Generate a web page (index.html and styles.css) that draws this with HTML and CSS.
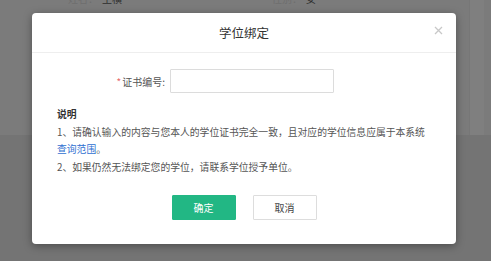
FILE: index.html
```html
<!DOCTYPE html>
<html lang="zh-CN">
<head>
<meta charset="utf-8">
<title>学位绑定</title>
<link rel="stylesheet" href="styles.css">
</head>
<body>
<div class="page">
  <div class="page-top">
    <div class="info-row">
      <span class="field"><span class="k">姓名：</span><span class="v">王横</span></span>
      <span class="field f2"><span class="k">性别：</span><span class="v">女</span></span>
    </div>
    <div class="scroll-strip"></div>
  </div>
  <div class="page-bottom"></div>
</div>
<div class="modal">
  <div class="modal-header">
    <span class="modal-title">学位绑定</span>
    <span class="close">
      <svg width="9" height="9" viewBox="0 0 9 9"><path d="M1 1L8 8M8 1L1 8" stroke="#c8c8c8" stroke-width="1.3" fill="none"/></svg>
    </span>
  </div>
  <div class="modal-body">
    <div class="form-row">
      <label class="form-label"><span class="req">*</span>证书编号:</label>
      <input class="form-input" type="text">
    </div>
    <div class="notes">
      <div class="notes-title">说明</div>
      <div>1、请确认输入的内容与您本人的学位证书完全一致，且对应的学位信息应属于本系统</div>
      <div><a class="link">查询范围</a>。</div>
      <div>2、如果仍然无法绑定您的学位，请联系学位授予单位。</div>
    </div>
    <div class="actions">
      <button class="btn btn-primary">确定</button>
      <button class="btn btn-default">取消</button>
    </div>
  </div>
</div>
</body>
</html>
```

FILE: styles.css
```css
html, body {
  margin: 0;
  padding: 0;
}
body {
  width: 491px;
  height: 261px;
  overflow: hidden;
  position: relative;
  font-family: "Noto Sans CJK SC", "Microsoft YaHei", sans-serif;
  background: #747474;
}
.page {
  display: flex;
  flex-direction: column;
  height: 261px;
}
.page-top {
  height: 135px;
  background: #7b7b7b;
  display: flex;
  position: relative;
}
.info-row {
  flex: 1;
  display: flex;
  margin-top: -8px;
  padding-left: 68px;
  font-size: 10px;
  line-height: 13px;
  height: 13px;
}
.field .k { color: #6e6e6e; margin-right: 4px; }
.field .v { color: #2e2e2e; }
.f2 { margin-left: 150px; }
.scroll-strip {
  width: 14px;
  margin-right: 7px;
  background: #7f7f7f;
  border-left: 1px solid #777;
}
.page-bottom {
  flex: 1;
  background: #747474;
}
.modal {
  position: absolute;
  left: 32px;
  top: 13px;
  width: 424px;
  height: 231px;
  background: #fff;
  border-radius: 4px;
  box-shadow: 0 2px 8px rgba(0, 0, 0, 0.35);
  display: flex;
  flex-direction: column;
}
.modal-header {
  height: 39px;
  border-bottom: 1px solid #eeeeee;
  display: flex;
  align-items: center;
  justify-content: center;
  position: relative;
}
.modal-title {
  font-size: 12.5px;
  color: #333;
}
.close {
  position: absolute;
  right: 13px;
  top: 13px;
  width: 9px;
  height: 9px;
  display: flex;
}
.modal-body {
  display: flex;
  flex-direction: column;
  padding-top: 16px;
}
.form-row {
  display: flex;
  align-items: center;
  height: 24px;
}
.form-label {
  width: 133px;
  text-align: right;
  font-size: 10px;
  color: #555;
  margin-right: 5px;
}
.req {
  color: #e66a6a;
  font-size: 10px;
  margin-right: 1px;
}
.form-input {
  width: 164px;
  height: 24px;
  box-sizing: border-box;
  border: 1px solid #dcdcdc;
  border-radius: 1px;
  margin: 0;
  padding: 0 6px;
  outline: none;
}
.notes {
  margin-top: 13px;
  padding-left: 25px;
  font-size: 9.8px;
  line-height: 17.6px;
  color: #555;
}
.notes-title {
  color: #333;
  font-weight: bold;
}
.link {
  color: #2f6fd1;
  text-decoration: none;
}
.actions {
  display: flex;
  justify-content: center;
  gap: 17px;
  margin-top: 19px;
}
.btn {
  width: 64px;
  height: 25px;
  box-sizing: border-box;
  font-family: "Noto Sans CJK SC", sans-serif;
  font-size: 10px;
  border-radius: 1px;
  margin: 0;
  padding: 0;
}
.btn-primary {
  background: #22b784;
  border: 1px solid #22b784;
  color: #fff;
}
.btn-default {
  background: #fff;
  border: 1px solid #dddddd;
  color: #444;
}
```
